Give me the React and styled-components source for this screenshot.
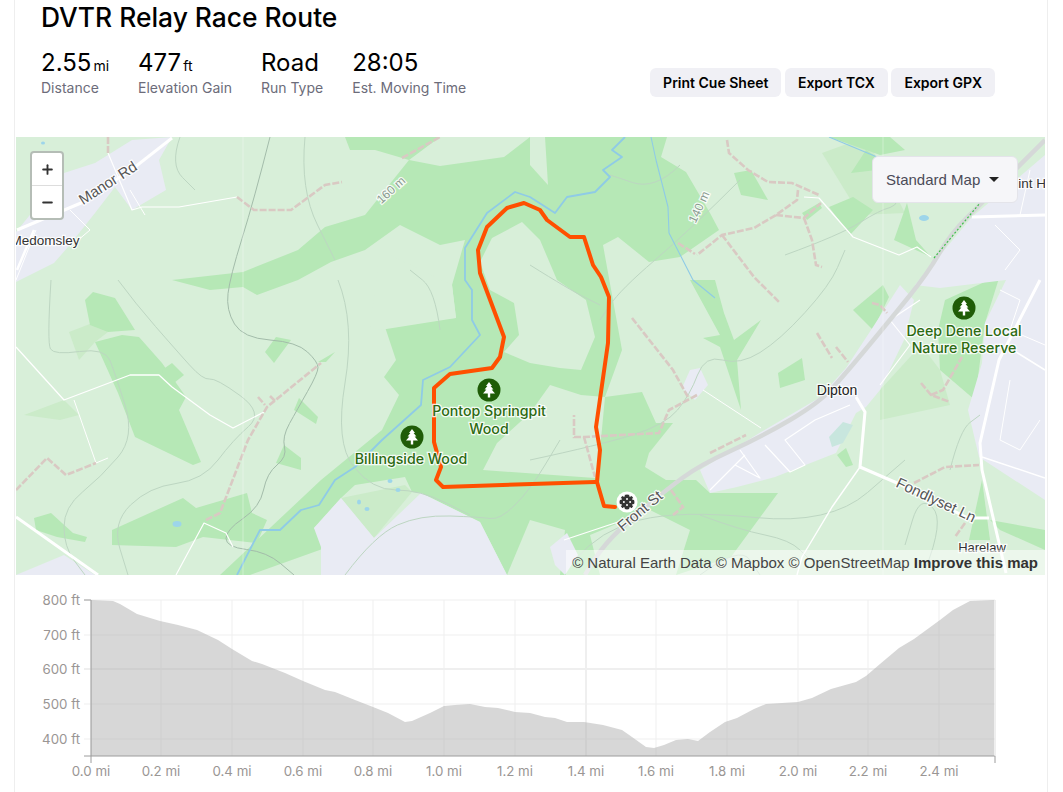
import React from 'react'
import styled, { createGlobalStyle } from 'styled-components'
import { Plus, Minus } from 'lucide-react'

const GlobalStyle = createGlobalStyle`
  html, body { margin: 0; padding: 0; background: #fff; }
  body { font-family: Inter, "Noto Sans", sans-serif; color: #000; overflow: hidden; }
`

const Frame = styled.div`
  box-sizing: border-box;
  width: 1034px;
  height: 792px;
  margin-left: 14px;
  border-left: 1px solid #eeeeee;
  border-right: 1px solid #eeeeee;
  overflow: hidden;
`
const Header = styled.header`
  height: 137px;
  padding-left: 26px;
  padding-right: 52px;
`
const Title = styled.h1`
  margin: 0;
  height: 35px;
  line-height: 35px;
  font-size: 26.4px;
  font-weight: 500;
`
const HeaderRow = styled.div`
  display: flex;
  align-items: flex-end;
  justify-content: space-between;
  margin-top: 14px;
`
const Stats = styled.div`
  display: flex;
  gap: 29px;
`
const Stat = styled.div`
  display: flex;
  flex-direction: column;
`
const StatValue = styled.div`
  height: 28px;
  font-size: 24px;
  line-height: 28px;
`
const Unit = styled.span`
  font-size: 14px;
  margin-left: 2px;
`
const StatLabel = styled.div`
  font-size: 14px;
  line-height: 22px;
  color: #6c6c7a;
`
const Actions = styled.div`
  display: flex;
  gap: 3.5px;
  padding-bottom: 2px;
`
const ActionButton = styled.button`
  height: 29px;
  padding: 0 13px;
  border: 0;
  border-radius: 6px;
  background: #f0f0f5;
  color: #000;
  font-family: inherit;
  font-size: 14px;
  font-weight: 600;
`
const MapBox = styled.section`
  position: relative;
  width: 1029px;
  height: 438px;
  margin-left: 1px;
  overflow: hidden;
  background: #d8efd9;
`
const MapArt = styled.svg`
  display: block;
  width: 1029px;
  height: 438px;
`
const ZoomControl = styled.div`
  position: absolute;
  left: 14px;
  top: 14px;
  width: 30px;
  border: 2px solid #b5bdb6;
  border-radius: 4px;
  background: #fff;
`
const ZoomButton = styled.div`
  display: flex;
  align-items: center;
  justify-content: center;
  height: 32px;
  color: #333;
  & + & { border-top: 1px solid #ddd; }
`
const StyleSelect = styled.div`
  position: absolute;
  left: 856px;
  top: 19px;
  box-sizing: border-box;
  width: 146px;
  height: 47px;
  display: flex;
  align-items: center;
  gap: 9px;
  padding-left: 13px;
  border: 1px solid #e4e4ea;
  border-radius: 6px;
  background: #f6f6f9;
  color: #4b4b58;
  font-family: "Liberation Sans", Arial, sans-serif;
  font-size: 15px;
`
const Caret = styled.span`
  width: 0;
  height: 0;
  border-left: 5px solid transparent;
  border-right: 5px solid transparent;
  border-top: 5px solid #222;
`
const Attribution = styled.div`
  position: absolute;
  right: 0;
  bottom: 0;
  height: 25px;
  line-height: 25px;
  padding: 0 7px 0 6px;
  background: rgba(255, 255, 255, 0.5);
  color: #444;
  font-family: "Liberation Sans", Arial, sans-serif;
  font-size: 15px;
  white-space: nowrap;
  b { color: #333; }
`
const ChartBox = styled.section`
  height: 217px;
`
const ChartArt = styled.svg`
  display: block;
  width: 1032px;
  height: 217px;
`

const FOREST = [
  'M220,575L321,480L382,430L399,395L384,377L396,360L385,327L370,327L375,322L456,318L452,285L465,240L440,245L400,225L365,250L331,262L298,280L257,295L243,287L210,290L172,280L243,272L298,250L325,227L365,215L385,190L409,160L440,166L504,157L530,137L667,137L661,157L686,172L710,213L719,230L680,257L649,262L618,237L603,245L622,350L605,397L642,392L656,423L673,423L649,453L645,467L666,480L696,480L710,493L778,493L731,557L676,575L507,575L480,522L421,493L412,492L405,477L355,485L341,498L314,528L328,547L250,575Z',
  'M345,137L440,137L409,160L375,150L350,150Z',
  'M85,300L93,292L115,298L135,330L108,332L90,325Z',
  'M95,342L122,335L139,337L162,363L186,397L179,410L201,462L193,465L135,437L118,393Z',
  'M172,363L184,375L169,387L162,370Z',
  'M276,337L291,340L274,363L265,352Z',
  'M299,398L318,417L316,424L294,410Z',
  'M284,445L301,458L301,470L276,463Z',
  'M335,352L326,362L318,362Z',
  'M112,530L183,498L196,508L247,493L252,513L267,520L257,543L203,537L176,547L112,545Z',
  'M34,518L51,513L73,533L87,537L85,542L57,537L36,530Z',
  'M690,280L715,280L724,313L734,340L761,320L737,360L741,410L720,347L703,338L720,335Z',
  'M778,373L802,358L805,380L780,388Z',
  'M853,310L883,285L889,297L873,330Z',
  'M837,455L846,448L853,465L846,467Z',
  'M851,173L866,150L877,157L877,170Z',
  'M734,173L751,170L768,200L741,195Z',
  'M802,213L819,203L822,208L807,220Z',
  'M829,207L853,197L873,210L850,235Z',
  'M907,203L916,240L931,257L894,240Z',
  'M945,300L1000,275L985,323L975,400L940,370L938,330Z',
  'M829,137L890,137L905,150L880,155Z',
  'M969,540L982,480L990,540Z',
  'M990,520L1045,530L1045,550L1000,530Z',
]
const SOFT = [
  'M69,332L95,322L108,332L95,342L79,360Z',
  'M24,415L64,400L79,415L60,420Z',
  'M822,153L866,137L905,213L860,215Z',
  'M880,390L921,345L940,370L950,405L880,420Z',
  'M341,498L405,485L412,492L374,538Z',
]
const CLEARING = [
  'M480,262L492,238L522,222L540,240L557,280L586,300L595,337L581,370L560,368L530,363L504,352L519,335L514,303L490,290Z',
  'M530,137L545,137L548,185L530,165Z',
  'M605,397L581,395L550,385L530,413L497,443L483,470L595,478L600,450Z',
  'M380,330L456,318L452,285L380,250L370,327Z',
  'M507,575L530,520L565,530L560,575Z',
  'M590,535L650,510L690,530L676,575L600,575Z',
]
const URBAN = [
  'M16,232L64,173L95,163L132,140L172,137L159,160L166,190L132,210L115,187L95,213L68,247L54,263L16,282Z',
  'M314,528L341,498L374,538L421,493L480,522L507,575L321,575L321,547Z',
  'M700,470L761,432L819,398L846,368L873,327L900,285L914,300L904,340L880,390L866,407L856,413L836,453L775,477L737,487L710,493Z',
  'M972,217L1045,155L1045,500L979,457L968,410L982,363L985,323L1006,280L940,288L915,285Z',
  'M550,547L567,533L578,555L565,575L555,565Z',
  'M690,370L700,368L708,385L695,400L682,388Z',
  'M16,575L64,555L95,575Z',
]
const ROADS = [
  { d: 'M16,347L64,400L130,375L159,375L172,387L210,415L233,428L264,412', w: 1.3 },
  { d: 'M74,400L96,463L108,458', w: 1 },
  { d: 'M16,517L98,575', w: 3 },
  { d: 'M176,575L204,523L226,533L233,547', w: 1.2 },
  { d: 'M172,138L135,167L81,203L17,230', w: 3 },
  { d: 'M34,230L17,270', w: 2.5 },
  { d: 'M108,153L132,210L142,207L179,207L237,197', w: 1.2 },
  { d: 'M804,197L819,198L853,237L899,255L917,247L931,257', w: 1.2 },
  { d: 'M703,390L761,428', w: 1 },
  { d: 'M856,397L865,412L860,467L897,483L968,518L989,518', w: 3 },
  { d: 'M860,467L832,507L802,557L797,575', w: 1.4 },
  { d: 'M1040,280L999,360L980,443L982,470L1006,573', w: 3 },
  { d: 'M564,540L618,522', w: 1.3 },
  { d: 'M1016,352L1045,370', w: 1.5 },
  { d: 'M982,457L1045,478', w: 1.5 },
  { d: 'M972,217L1045,215', w: 3 },
  { d: 'M710,490L735,465L745,455M735,465L760,478L740,450M765,445L790,472L805,465L785,440L815,420L850,405', w: 1.2 },
  { d: 'M880,385L910,345L890,320L920,300', w: 1.2 },
  { d: 'M1000,290L1020,300L1010,330L1045,345', w: 1 },
  { d: 'M1010,380L1000,440L1020,450L1040,420', w: 1 },
  { d: 'M995,225L1020,250L1005,270', w: 1 },
  { d: 'M1030,170L1020,215', w: 1 },
  { d: 'M16,280L36,230', w: 1 },
  { d: 'M130,190L145,215', w: 1 },
  { d: 'M70,210L90,230L70,247', w: 1 },
]
const TRACKS = [
  'M237,197L254,210L291,210L325,185L342,182',
  'M402,158L440,137',
  'M16,490L47,458L66,475L96,463',
  'M206,520L220,513L248,440L267,407L321,363',
  'M258,397L265,405',
  'M270,396L276,402',
  'M108,137L108,153',
  'M727,140L729,153L748,170L768,182L792,183L819,195',
  'M798,190L797,200L776,215L754,228L722,235L697,255',
  'M678,243L695,254',
  'M776,215L804,218L821,203',
  'M804,218L812,240L816,265L822,267',
  'M722,235L754,277L780,303',
  'M632,318L673,370L688,397',
  'M697,395L669,410L659,433L584,437L574,437L574,415',
  'M584,437L595,477',
  'M710,453L746,435',
  'M671,490L683,507L673,515',
  'M817,333L832,358',
  'M836,347L848,362',
  'M872,303L880,305L887,313',
  'M921,383L931,395L950,402',
  'M931,395L943,390L962,357',
  'M914,483L945,467L979,465',
  'M965,523L955,537',
]
const CONTOURS = [
  'M270,137L254,200L230,277L226,310L243,338L297,342L318,362L318,373L297,410L282,437L287,457L267,473L260,507L226,530L226,547L267,552L294,575',
  'M51,280L47,343L54,355L105,348L115,373L135,437L101,477L64,507L64,547L85,575',
  'M118,280L135,303L176,350L203,380L216,378L264,413L233,440L203,480L149,487L112,523L128,575',
  'M338,280L355,323L335,443L372,490L420,490L470,515',
  'M305,137L300,190L335,260',
  'M180,137L170,165L195,190',
  'M530,460L600,445L665,425L690,395L705,355L740,365L780,340L830,285L845,250',
  'M440,330L435,290L410,270',
  'M345,575L375,535L420,515L480,517L500,520L530,490L560,440',
  'M575,560L600,530L680,510L830,525L905,460',
  'M740,180L690,230L620,290L600,320',
  'M680,165L655,190L610,175',
  'M785,255L840,235L880,210L900,205L905,160',
  'M530,265L570,290L600,305',
  'M700,515L740,530L790,540L810,560',
  'M700,575L740,545L760,575',
  'M950,470L960,430L980,415',
  'M925,570L945,520L920,495L905,545',
]
const WATER = [
  'M237,575L260,530L280,530L301,510L319,505L335,480L355,467L382,440L421,405L423,380L450,367L480,335L472,320L472,290L465,280L465,248L487,213L515,192L530,197L555,213L567,197L595,192L610,177L603,170L622,157L612,150L625,137',
]
const STREAMS = ['M651,137L656,160L668,207L669,233L693,280L715,298', 'M829,137L877,157']
const PONDS = [
  { cx: 177, cy: 524, rx: 4.5, ry: 3 },
  { cx: 390, cy: 481, rx: 2.5, ry: 2 },
  { cx: 398, cy: 490, rx: 2.5, ry: 2 },
  { cx: 359, cy: 502, rx: 2, ry: 2.5 },
  { cx: 367, cy: 509, rx: 2.5, ry: 2 },
  { cx: 924, cy: 218, rx: 5, ry: 3 },
  { cx: 43, cy: 143, rx: 2, ry: 1.5 },
]
const ROUTE =
  'M615,507L604,506L597,482L600,450L596,427L602,385L608,343L609,297L601,277L593,265L584,237L570,237L547,220L540,210L524,203L507,208L487,227L478,250L480,273L495,313L504,337L500,357L492,368L450,374L434,388L434,442L441,467L436,480L443,487L595,482'

const ELEVATION =
  'M91,600L113,601L120,604L137,614L160,621L178,625L197,630L218,640L232,649L252,661L262,664L285,673L303,681L325,690L335,692L355,700L373,707L388,713L405,722L412,721L430,713L444,706L455,705L470,704L485,707L498,708L515,712L530,713L545,717L555,718L567,722L584,722L603,725L622,730L632,737L646,747L654,748L664,745L676,740L688,739L698,741L710,732L725,722L737,718L754,709L766,704L798,702L812,698L831,689L856,682L866,676L880,664L899,648L914,639L940,620L953,610L970,601L994,600L994,756L91,756Z'
const FEET = [
  { label: '800 ft', y: 600 },
  { label: '700 ft', y: 635 },
  { label: '600 ft', y: 669 },
  { label: '500 ft', y: 704 },
  { label: '400 ft', y: 739 },
]
const MILES = [
  ['0.0 mi', 91], ['0.2 mi', 161], ['0.4 mi', 232], ['0.6 mi', 303], ['0.8 mi', 373],
  ['1.0 mi', 444], ['1.2 mi', 515], ['1.4 mi', 586], ['1.6 mi', 656], ['1.8 mi', 727],
  ['2.0 mi', 798], ['2.2 mi', 868], ['2.4 mi', 939],
]

// rounds a polyline off through its segment midpoints, the contours are never angular
const smooth = (d) => {
  const pts = d.match(/-?\d+(\.\d+)?,-?\d+(\.\d+)?/g).map((p) => p.split(',').map(Number))
  let out = `M${pts[0][0]},${pts[0][1]}`
  for (let i = 1; i < pts.length - 1; i++) {
    const mx = (pts[i][0] + pts[i + 1][0]) / 2
    const my = (pts[i][1] + pts[i + 1][1]) / 2
    out += `Q${pts[i][0]},${pts[i][1]} ${mx},${my}`
  }
  const last = pts[pts.length - 1]
  return `${out}L${last[0]},${last[1]}`
}

const LabelText = styled.text`
  font-family: "Liberation Sans", Arial, sans-serif;
  font-size: ${(p) => p.size || 13}px;
  fill: ${(p) => p.color || '#555'};
  stroke: #fff;
  stroke-width: 2.5px;
  stroke-opacity: 0.85;
  paint-order: stroke;
  text-anchor: middle;
`
const ParkLabel = styled(LabelText)`
  font-family: Inter, sans-serif;
  font-size: 14.2px;
  font-weight: 500;
  fill: #2c6a12;
`
const AxisText = styled.text`
  font-family: Inter, sans-serif;
  font-size: 13.3px;
  fill: #9a9694;
`

const Tree = ({ x, y }) => (
  <g transform={`translate(${x} ${y})`}>
    <circle r="11.5" fill="#1f5c07" />
    <path
      d="M0,-8L3,-4H1.6L4.4,-0.6H2.6L6,3.4H1.2V7.5H-1.2V3.4H-6L-2.6,-0.6H-4.4L-1.6,-4H-3Z"
      fill="#fff"
    />
  </g>
)

const FinishMarker = ({ x, y }) => {
  const holes = []
  for (let i = -2; i <= 2; i++) {
    for (let j = -2; j <= 2; j++) {
      if ((i + j) % 2 !== 0 && Math.abs(i) + Math.abs(j) <= 3) {
        holes.push(<circle key={`${i}${j}`} cx={i * 3.1} cy={j * 3.1} r="1" fill="#fff" />)
      }
    }
  }
  return (
    <g transform={`translate(${x} ${y})`}>
      <circle r="10.5" fill="#fff" />
      <circle r="7.5" fill="#333" />
      {holes}
    </g>
  )
}

const RouteMap = () => (
  <MapArt viewBox="16 137 1029 438">
    <rect x="16" y="137" width="1029" height="438" fill="#d8efd9" />
    {SOFT.map((d) => (
      <path key={d} d={d} fill="#cbebc9" />
    ))}
    {FOREST.map((d) => (
      <path key={d} d={d} fill="#b6e8b6" />
    ))}
    {CLEARING.map((d) => (
      <path key={d} d={d} fill="#d8efd9" />
    ))}
    {URBAN.map((d) => (
      <path key={d} d={d} fill="#e9ebf4" />
    ))}
    <path d="M829,437L843,422L853,425L843,443L832,447Z" fill="#c8e6de" />
    {CONTOURS.map((d, i) => (
      <path key={d} d={smooth(d)} fill="none" stroke={i < 1 ? '#a3bcaa' : '#bdd6c2'} strokeWidth="1" />
    ))}
    {WATER.map((d) => (
      <path key={d} d={d} fill="none" stroke="#8fcbe6" strokeWidth="1.8" strokeLinejoin="round" />
    ))}
    {STREAMS.map((d) => (
      <path key={d} d={d} fill="none" stroke="#8fcbe6" strokeWidth="1.1" strokeLinejoin="round" />
    ))}
    {PONDS.map((p) => (
      <ellipse key={p.cx} {...p} fill="#9dd5ea" />
    ))}
    {ROADS.map((r) => (
      <path key={r.d} d={r.d} fill="none" stroke="#fff" strokeWidth={r.w} strokeLinejoin="round" />
    ))}
    <path
      d={smooth('M585,575L595,557L618,530L666,490L700,465L761,437L819,403L846,373L890,320L928,273L951,233L985,200L1045,140')}
      fill="none"
      stroke="#d5d8d8"
      strokeWidth="4.5"
    />
    <path d="M934,258L980,203" fill="none" stroke="#3ec24a" strokeWidth="1.2" strokeDasharray="2 2" />
    {TRACKS.map((d) => (
      <path key={d} d={d} fill="none" stroke="#d9c9c3" strokeWidth="2.6" strokeDasharray="7 2" />
    ))}
    <line x1="243" y1="137" x2="243" y2="575" stroke="#fff" strokeOpacity="0.35" />
    <line x1="883" y1="137" x2="883" y2="575" stroke="#fff" strokeOpacity="0.35" />
    <path d={ROUTE} fill="none" stroke="#ff5000" strokeWidth="4" strokeLinejoin="round" strokeLinecap="round" />
    <Tree x={489} y={390} />
    <Tree x={412} y={437} />
    <Tree x={964} y={308} />
    <FinishMarker x={627} y={502} />
    <LabelText x="108" y="188" transform="rotate(-33 108 183)" size={15}>Manor Rd</LabelText>
    <LabelText x="45" y="245" color="#333" size={13.5}>Medomsley</LabelText>
    <LabelText x="391" y="194" transform="rotate(-42 391 190)" size={12} color="#8a9a90">160 m</LabelText>
    <LabelText x="699" y="211" transform="rotate(-65 699 207)" size={12} color="#8a9a90">140 m</LabelText>
    <LabelText x="1031" y="188" color="#333" size={13.5}>Flint Hill</LabelText>
    <ParkLabel x="489" y="416">Pontop Springpit</ParkLabel>
    <ParkLabel x="489" y="434">Wood</ParkLabel>
    <ParkLabel x="411" y="464">Billingside Wood</ParkLabel>
    <ParkLabel x="964" y="336">Deep Dene Local</ParkLabel>
    <ParkLabel x="964" y="353">Nature Reserve</ParkLabel>
    <LabelText x="837" y="395" color="#222" size={14}>Dipton</LabelText>
    <LabelText x="640" y="516" transform="rotate(-40 640 511)" size={15}>Front St</LabelText>
    <LabelText x="936" y="505" transform="rotate(25 936 500)" size={15}>Fondlyset Ln</LabelText>
    <LabelText x="982" y="552" size={13} color="#333">Harelaw</LabelText>
  </MapArt>
)

const ElevationChart = () => (
  <ChartArt viewBox="15 575 1032 217">
    {FEET.map((f) => (
      <g key={f.label}>
        <line x1="84" x2="995" y1={f.y} y2={f.y} stroke="#efefef" strokeWidth={f.y === 669 ? 2 : 1} />
        <AxisText x="80" y={f.y + 4.5} textAnchor="end">{f.label}</AxisText>
      </g>
    ))}
    {MILES.map(([label, x]) => (
      <g key={label}>
        <line x1={x} x2={x} y1="600" y2="756" stroke="#efefef" strokeWidth={x === 586 ? 2 : 1} />
        <AxisText x={x} y="776" textAnchor="middle">{label}</AxisText>
      </g>
    ))}
    <path d={ELEVATION} fill="#b0b0b0" fillOpacity="0.5" />
    <path d="M84,600H91V756M84,756H995V763M91,756V763" fill="none" stroke="#9c9c9c" strokeWidth="1" />
    <line x1="995" x2="995" y1="600" y2="756" stroke="#dedede" />
  </ChartArt>
)

export default function App() {
  return (
    <Frame>
      <GlobalStyle />
      <Header>
        <Title>DVTR Relay Race Route</Title>
        <HeaderRow>
          <Stats>
            <Stat>
              <StatValue>2.55<Unit>mi</Unit></StatValue>
              <StatLabel>Distance</StatLabel>
            </Stat>
            <Stat>
              <StatValue>477<Unit>ft</Unit></StatValue>
              <StatLabel>Elevation Gain</StatLabel>
            </Stat>
            <Stat>
              <StatValue>Road</StatValue>
              <StatLabel>Run Type</StatLabel>
            </Stat>
            <Stat>
              <StatValue>28:05</StatValue>
              <StatLabel>Est. Moving Time</StatLabel>
            </Stat>
          </Stats>
          <Actions>
            <ActionButton>Print Cue Sheet</ActionButton>
            <ActionButton>Export TCX</ActionButton>
            <ActionButton>Export GPX</ActionButton>
          </Actions>
        </HeaderRow>
      </Header>
      <MapBox>
        <RouteMap />
        <ZoomControl>
          <ZoomButton><Plus size={15} strokeWidth={3} /></ZoomButton>
          <ZoomButton><Minus size={15} strokeWidth={3} /></ZoomButton>
        </ZoomControl>
        <StyleSelect>
          Standard Map
          <Caret />
        </StyleSelect>
        <Attribution>
          © Natural Earth Data © Mapbox © OpenStreetMap <b>Improve this map</b>
        </Attribution>
      </MapBox>
      <ChartBox>
        <ElevationChart />
      </ChartBox>
    </Frame>
  )
}
